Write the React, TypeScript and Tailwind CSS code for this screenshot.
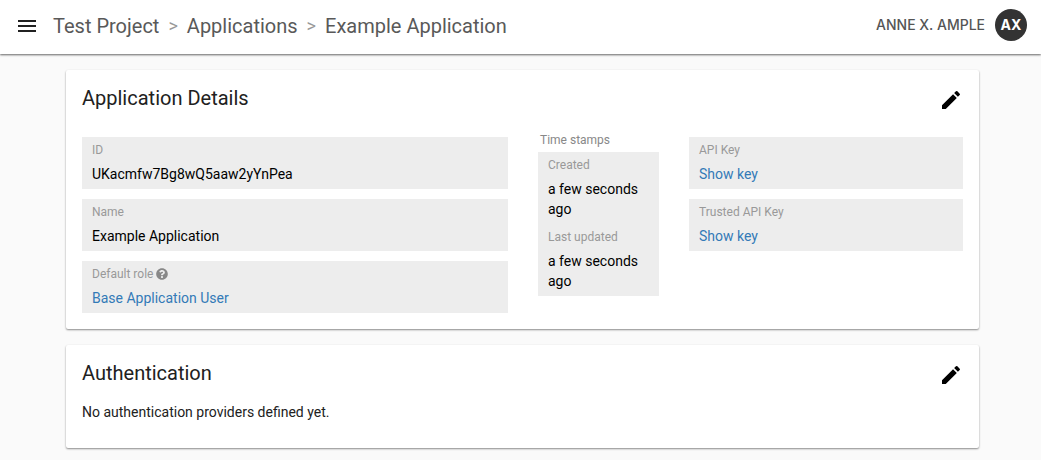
import React from 'react';
import { MdMenu, MdEdit } from 'react-icons/md';
import { FaQuestionCircle } from 'react-icons/fa';

function Field({ label, children }: { label: React.ReactNode; children: React.ReactNode }) {
  return (
    <div className="bg-[#ededed] px-2.5 pt-[3px] pb-[5px]">
      <div className="text-xs leading-5 text-[#999999]">{label}</div>
      <div className="pt-1 text-sm leading-5">{children}</div>
    </div>
  );
}

function Card({ title, children }: { title: string; children: React.ReactNode }) {
  return (
    <section className="rounded-xs bg-white p-4 shadow-[0_1px_2px_rgba(0,0,0,0.45)]">
      <div className="flex items-start justify-between">
        <h2 className="text-xl leading-6 text-[#212121]">{title}</h2>
        <button aria-label={`Edit ${title}`} className="mt-0.5">
          <MdEdit size={24} />
        </button>
      </div>
      {children}
    </section>
  );
}

export default function App() {
  return (
    <div className="min-h-screen bg-[#fafafa] font-[Roboto,sans-serif] text-black">
      <header className="flex items-center justify-between bg-white pt-[9px] pr-3.5 pb-[13px] pl-[15px] shadow-[0_1px_2px_rgba(0,0,0,0.6)]">
        <div className="flex items-center gap-3.5 pt-0.5">
          <button aria-label="Menu">
            <MdMenu size={24} className="text-[#212121]" />
          </button>
          <nav className="flex items-center gap-[9px] text-xl text-[#595959]">
            <a href="#">Test Project</a>
            <span className="text-lg text-[#999999]">&gt;</span>
            <a href="#">Applications</a>
            <span className="text-lg text-[#999999]">&gt;</span>
            <a href="#">Example Application</a>
          </nav>
        </div>
        <button className="flex items-center gap-2.5 font-[Inter,sans-serif] text-sm font-medium text-[#555555]">
          ANNE X. AMPLE
          <span className="flex size-8 items-center justify-center rounded-full bg-[#333333] font-bold text-white">AX</span>
        </button>
      </header>

      <main className="flex flex-col gap-4 pt-4 pr-[62px] pb-3 pl-[66px]">
        <Card title="Application Details">
          <div className="mt-5 grid grid-cols-[426fr_121fr_274fr] items-start gap-[30px]">
            <div className="flex flex-col gap-2.5 pt-[5px]">
              <Field label="ID">UKacmfw7Bg8wQ5aaw2yYnPea</Field>
              <Field label="Name">Example Application</Field>
              <Field
                label={
                  <span className="flex items-center gap-[3px]">
                    Default role <FaQuestionCircle className="text-[#888888]" />
                  </span>
                }
              >
                <a href="#" className="text-[#337ab7]">Base Application User</a>
              </Field>
            </div>
            <div>
              <div className="mb-1 pl-0.5 text-xs leading-4 text-[#888888]">Time stamps</div>
              <Field label="Created">a few seconds ago</Field>
              <Field label="Last updated">a few seconds ago</Field>
            </div>
            <div className="flex flex-col gap-2.5 pt-[5px]">
              <Field label="API Key">
                <button className="text-[#337ab7]">Show key</button>
              </Field>
              <Field label="Trusted API Key">
                <button className="text-[#337ab7]">Show key</button>
              </Field>
            </div>
          </div>
        </Card>
        <Card title="Authentication">
          <p className="mt-[15px] mb-2.5 text-sm text-[#212121]">No authentication providers defined yet.</p>
        </Card>
      </main>
    </div>
  );
}
